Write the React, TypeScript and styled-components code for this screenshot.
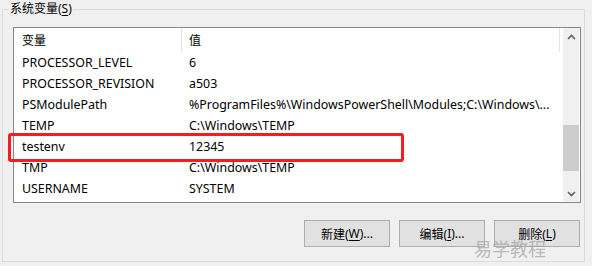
import React from "react";
import styled, { createGlobalStyle } from "styled-components";

type EnvVar = { name: string; value: string; marked?: boolean };

const variables: EnvVar[] = [
  { name: "PROCESSOR_LEVEL", value: "6" },
  { name: "PROCESSOR_REVISION", value: "a503" },
  {
    name: "PSModulePath",
    value: "%ProgramFiles%\\WindowsPowerShell\\Modules;C:\\Windows\\...",
  },
  { name: "TEMP", value: "C:\\Windows\\TEMP" },
  { name: "testenv", value: "12345", marked: true },
  { name: "TMP", value: "C:\\Windows\\TEMP" },
  { name: "USERNAME", value: "SYSTEM" },
];

const App: React.FC = () => {
  return (
    <>
      <GlobalStyle />
      <Page>
        <GroupBox>
          <Legend>
            系统变量(<u>S</u>)
          </Legend>

          <ListView>
            <ListBody>
              <HeaderRow>
                <HeaderCell>变量</HeaderCell>
                <HeaderCell $value>值</HeaderCell>
                <HeaderFill />
              </HeaderRow>
              {variables.map((v) => (
                <Row key={v.name} $marked={v.marked}>
                  <NameCell>{v.name}</NameCell>
                  <ValueCell>{v.value}</ValueCell>
                </Row>
              ))}
            </ListBody>

            <ScrollBar>
              <ArrowButton>
                <svg width="9" height="6" viewBox="0 0 9 6">
                  <polyline
                    points="1,5 4.5,1.5 8,5"
                    fill="none"
                    stroke="#606060"
                    strokeWidth="1.6"
                  />
                </svg>
              </ArrowButton>
              <Track>
                <Thumb />
              </Track>
              <ArrowButton>
                <svg width="9" height="6" viewBox="0 0 9 6">
                  <polyline
                    points="1,1 4.5,4.5 8,1"
                    fill="none"
                    stroke="#606060"
                    strokeWidth="1.6"
                  />
                </svg>
              </ArrowButton>
            </ScrollBar>
          </ListView>

          <ButtonRow>
            <Button>
              新建(<u>W</u>)...
            </Button>
            <Button>
              编辑(<u>I</u>)...
            </Button>
            <Button>
              删除(<u>L</u>)
            </Button>
          </ButtonRow>
        </GroupBox>

        <Watermark>易学教程</Watermark>
      </Page>
    </>
  );
};

const GlobalStyle = createGlobalStyle`
  html, body {
    margin: 0;
    padding: 0;
    background: #f0f0f0;
  }
  body {
    font-family: "Noto Sans", "Noto Sans CJK SC", sans-serif;
    font-size: 12px;
    color: #000;
  }
  u {
    text-decoration-thickness: 1px;
    text-underline-offset: 2px;
  }
`;

const Page = styled.div`
  position: relative;
  width: 592px;
  height: 266px;
  padding: 9px 0 0 2px;
  box-sizing: border-box;
  overflow: hidden;
`;

const GroupBox = styled.div`
  position: relative;
  width: 583px;
  height: 253px;
  box-sizing: border-box;
  border: 1px solid #dcdcdc;
  padding: 17px 3px 0 10px;
`;

const Legend = styled.div`
  position: absolute;
  top: -9px;
  left: 6px;
  padding: 0 1px;
  line-height: 16px;
  background: #f0f0f0;
`;

const ListView = styled.div`
  display: flex;
  height: 176px;
  box-sizing: border-box;
  border: 1px solid #828790;
  background: #fff;
`;

const ListBody = styled.div`
  flex: 1;
  display: flex;
  flex-direction: column;
  min-width: 0;
  font-size: 12.4px;
`;

const HeaderRow = styled.div`
  display: grid;
  grid-template-columns: 168px 378px 1fr;
  height: 24px;
  flex-shrink: 0;
  font-size: 12px;
`;

const HeaderCell = styled.div<{ $value?: boolean }>`
  display: flex;
  align-items: center;
  padding-left: ${({ $value }) => ($value ? "7px" : "8px")};
  border-right: 1px solid #e5e5e5;
`;

const HeaderFill = styled.div``;

const Row = styled.div<{ $marked?: boolean }>`
  position: relative;
  display: grid;
  grid-template-columns: 168px 378px;
  height: 21px;
  flex-shrink: 0;
  align-items: center;

  ${({ $marked }) =>
    $marked &&
    `
    &::after {
      content: "";
      position: absolute;
      left: -6px;
      top: -3px;
      width: 396px;
      height: 29px;
      box-sizing: border-box;
      border: 3px solid #f51d1d;
      border-radius: 3px;
      pointer-events: none;
    }
  `}
`;

const NameCell = styled.div`
  padding-left: 8px;
  white-space: nowrap;
  overflow: hidden;
`;

const ValueCell = styled.div`
  padding-left: 7px;
  white-space: nowrap;
  overflow: hidden;
`;

const ScrollBar = styled.div`
  width: 16px;
  margin-right: 1px;
  display: flex;
  flex-direction: column;
  background: #f0f0f0;
`;

const ArrowButton = styled.div`
  height: 17px;
  display: flex;
  align-items: center;
  justify-content: center;
  flex-shrink: 0;
`;

const Track = styled.div`
  flex: 1;
  padding-top: 80px;
`;

const Thumb = styled.div`
  height: 46px;
  background: #cdcdcd;
`;

const ButtonRow = styled.div`
  display: flex;
  justify-content: flex-end;
  gap: 9px;
  margin-top: 17px;
  padding-right: 1px;
`;

const Button = styled.div`
  width: 86px;
  height: 27px;
  box-sizing: border-box;
  display: flex;
  align-items: center;
  justify-content: center;
  background: #e1e1e1;
  border: 1px solid #adadad;
`;

const Watermark = styled.div`
  position: absolute;
  left: 474px;
  top: 239px;
  font-size: 18px;
  line-height: 20px;
  color: rgba(160, 160, 160, 0.7);
  pointer-events: none;
`;

export default App;
